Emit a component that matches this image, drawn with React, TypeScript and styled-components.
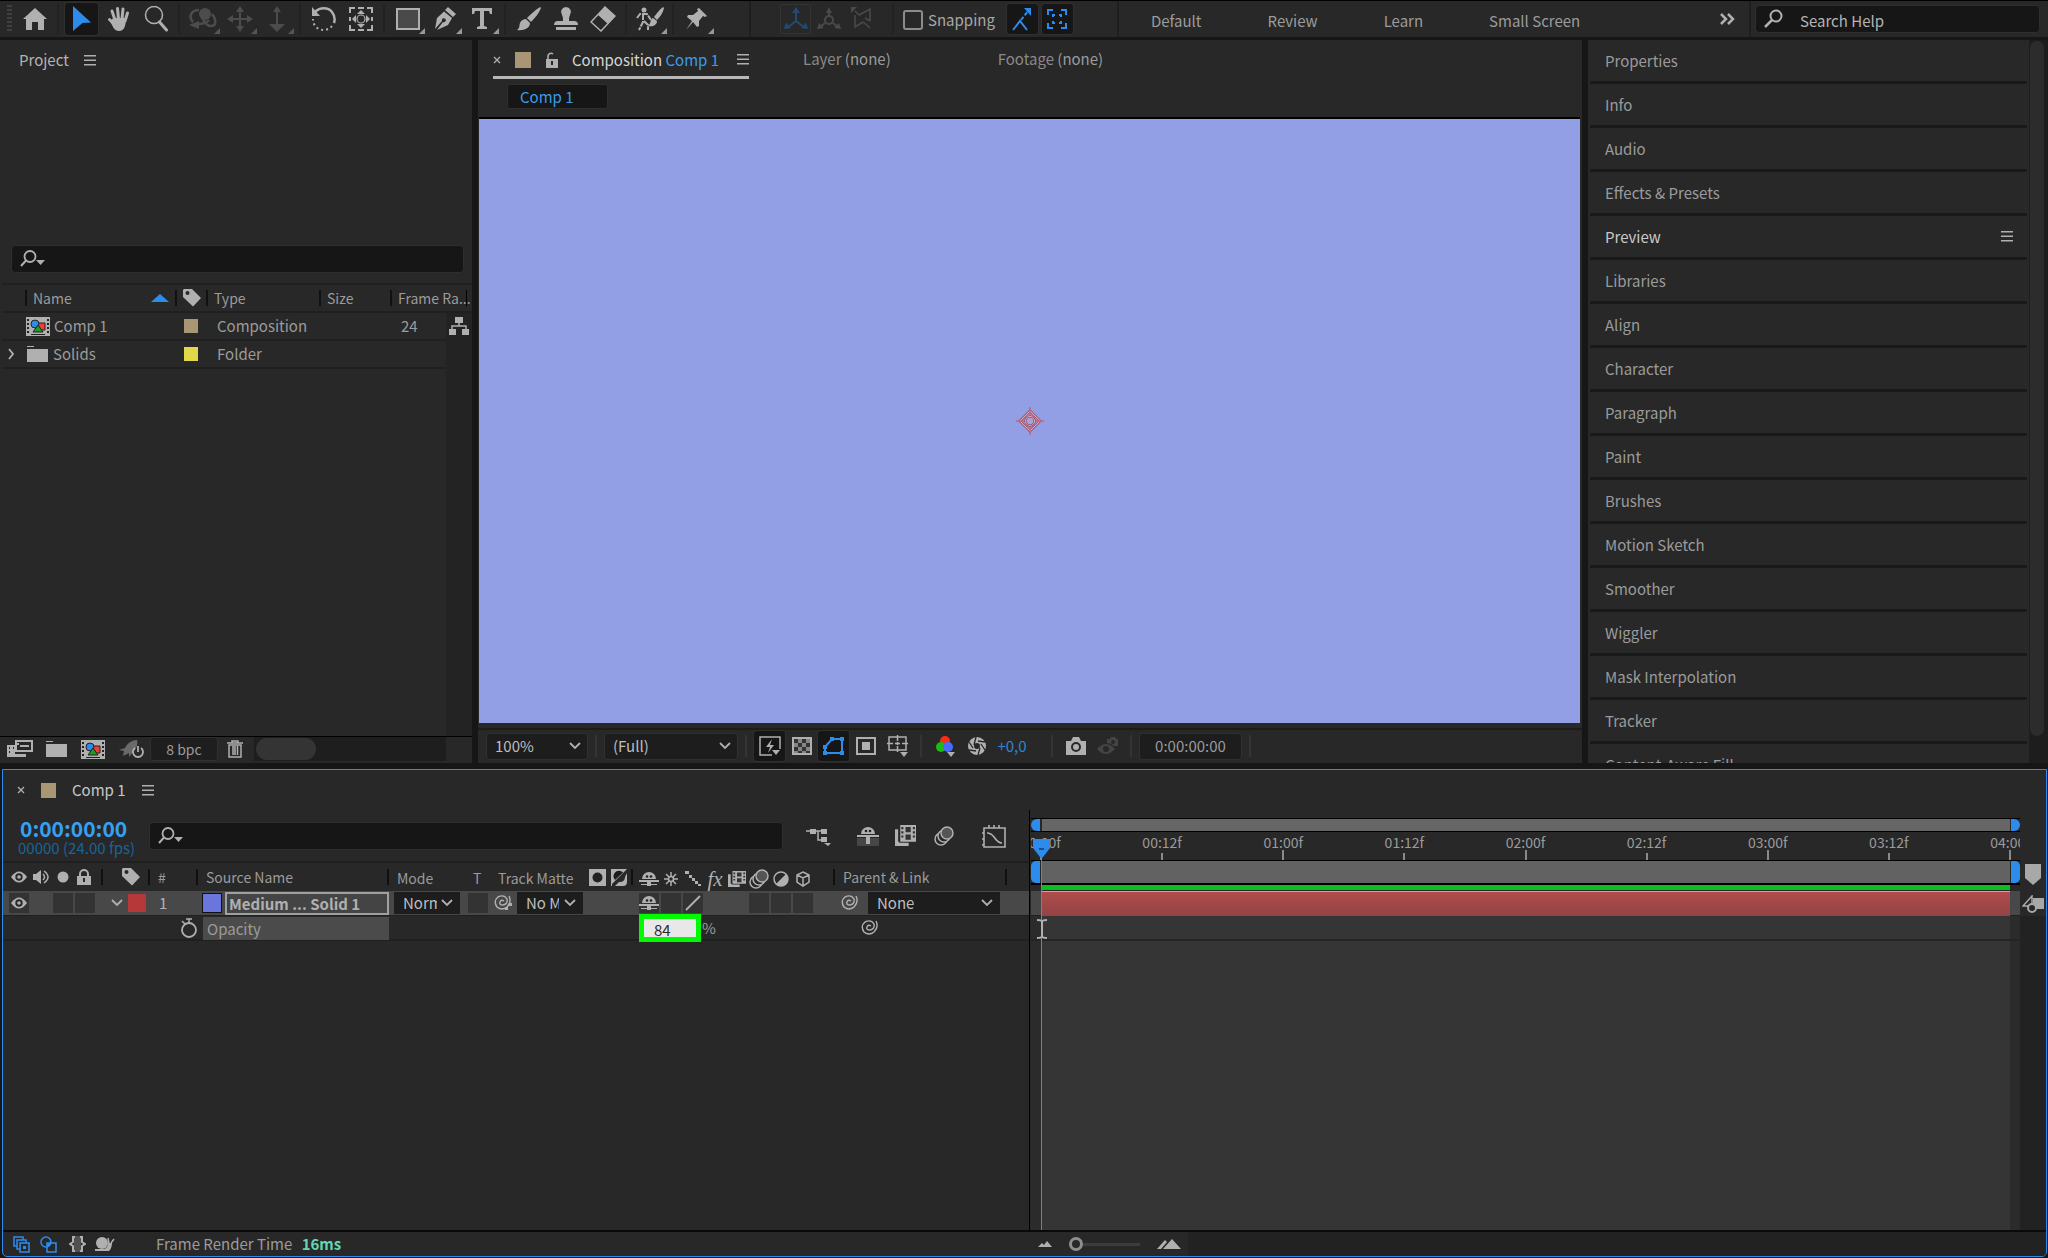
import React from 'react';
import styled, { createGlobalStyle, css } from 'styled-components';

const c = {
  gutter: '#161616',
  panel: '#282828',
  field: '#161616',
  box: '#1d1d1d',
  line: '#1c1c1c',
  text: '#9b9b9b',
  bright: '#c8c8c8',
  icon: '#b0b0b0',
  blue: '#2d8ceb',
  sand: '#a99675',
};

const Global = createGlobalStyle`
  * { box-sizing: border-box; }
  html, body { margin: 0; background: ${c.gutter}; }
  body, button, input, select, table {
    font-family: "Noto Sans CJK SC", "Noto Sans", sans-serif;
    font-size: 15px;
    line-height: 20px;
    color: ${c.text};
  }
  button { padding: 0; border: 0; background: none; }
  svg { display: block; flex: none; }
  h2, p { margin: 0; font-size: 15px; font-weight: 400; }
`;

const App_ = styled.div`
  display: grid;
  grid-template-rows: 40px minmax(0, 1fr) 489px;
  height: 100vh;
  min-width: 1600px;
  overflow: hidden;
`;

/* ---------- icons ---------- */

type IconProps = { w: number; h: number; children: React.ReactNode; color?: string };
const Icon = ({ w, h, children, color = c.icon }: IconProps) => (
  <svg width={w} height={h} viewBox={`0 0 ${w} ${h}`} fill={color} color={color} aria-hidden="true">
    {children}
  </svg>
);
const stroke = { fill: 'none', stroke: 'currentColor', strokeWidth: 2 };
const thin = { fill: 'none', stroke: 'currentColor', strokeWidth: 1.5 };

const HomeIcon = () => (
  <Icon w={24} h={22}><path d="M12 0L24 11h-3v11h-6v-8H9v8H3V11H0z" /></Icon>
);
const ArrowIcon = () => (
  <Icon w={20} h={26} color={c.blue}><path d="M1 0L19 16.500L10.500 17L1 25z" /></Icon>
);
const HandIcon = () => (
  <Icon w={24} h={26}>
    <g fill="none" stroke="currentColor" strokeWidth="3" strokeLinecap="round">
      <path d="M8 14L5 5M11.500 13L10.500 2.500M15 13L16 3M18 15L20.500 7M8 19L2.500 13.500" />
    </g>
    <path d="M6.500 12h13l-1.500 8q-1.500 5-6 5q-4 0-6-4l-3-6z" />
  </Icon>
);
const ZoomIcon = () => (
  <Icon w={24} h={26}>
    <circle cx="10" cy="9" r="8.500" {...thin} />
    <path d="M15.500 16L22.500 24" stroke="currentColor" strokeWidth="3" strokeLinecap="round" />
  </Icon>
);
const OrbitIcon = () => (
  <Icon w={28} h={26} color="#4c4c4c">
    <circle cx="16" cy="8" r="6" />
    <path d="M10 4C2 4 -1 11 4 16M9 18C14 18 19 16 20 14M23 8C28 14 27 20 22 20C18 20 15 16 14 13" {...stroke} strokeWidth="2.500" />
    <path d="M0 19l10-4v8z" />
  </Icon>
);
const PanIcon = () => (
  <Icon w={26} h={26} color="#4c4c4c">
    <path d="M12 5h2v7h7v2h-7v7h-2v-7H5v-2h7z" />
    <path d="M13 0l4 6H9zM13 26l4-6H9zM0 13l6-4v8zM26 13l-6-4v8z" />
  </Icon>
);
const DollyIcon = () => (
  <Icon w={18} h={26} color="#4c4c4c">
    <path d="M8 4h2v14H8zM9 0l4 6H5zM9 26l-8-8h16z" />
  </Icon>
);
const RotateIcon = () => (
  <Icon w={26} h={26}>
    <path d="M4 6C9 1 17 1 21 6C24 10 24 14 23 17" {...stroke} strokeWidth="2.500" />
    <path d="M1 1v9h8z" />
    <path d="M21 20C17 25 9 25 5 21C3 19 2 16 2 13" {...stroke} strokeDasharray="2 3" />
  </Icon>
);
const AnchorIcon = () => (
  <Icon w={26} h={26}>
    <path d="M2 7V2h5M19 2h5v5M24 19v5h-5M7 24H2v-5M10 2h6M10 24h6M2 11v4M24 11v4" {...stroke} />
    <circle cx="13" cy="13" r="4" fill="none" stroke="currentColor" strokeWidth="1.200" />
    <path d="M13 4l4 4H9zM13 22l4-4H9zM4 13l4-4v8zM22 13l-4-4v8z" />
  </Icon>
);
const RectIcon = () => (
  <Icon w={24} h={22}><rect x="1" y="1" width="22" height="20" fill="#4a4a4a" stroke="currentColor" strokeWidth="2" /></Icon>
);
const PenIcon = () => (
  <Icon w={24} h={24}>
    <path d="M15 0l8 7l-3 3l-8-7zM11 4.500l8 6.500l-4 7l-11 5l6-8a2 2 0 1 0-1-1l-7 8L4 11z" />
  </Icon>
);
const TypeIcon = () => (
  <Icon w={22} h={22}><path d="M1 0h20v6h-2l-1-3h-5v15l3 1v2H6v-2l3-1V3H4L3 6H1z" /></Icon>
);
const BrushIcon = () => (
  <Icon w={26} h={24}>
    <path d="M24 0l1 1c-2 5-6 10-10 14l-4-4C15 7 19 3 24 0zM10 12l4 4c0 5-6 8-13 7c3-2 2-4 3-7c1-3 4-4 6-4z" />
  </Icon>
);
const StampIcon = () => (
  <Icon w={24} h={24}>
    <path d="M12 0a5 5 0 0 1 4 8c-1 2-1 4-1 6h5q4 0 4 4H0q0-4 4-4h5c0-2 0-4-1-6a5 5 0 0 1 4-8zM2 20h20v3H2z" />
  </Icon>
);
const EraserIcon = () => (
  <Icon w={26} h={26}>
    <path d="M15 1l10 9L11 25L1 16z" {...thin} />
    <path d="M15 1l10 9l-7 8L8 9z" />
  </Icon>
);
const RotoIcon = () => (
  <Icon w={30} h={26}>
    <circle cx="9" cy="4" r="2.500" />
    <path d="M2 12l3-4h7l4 6M8 8v8l-4 8M9 15l4 4v5" {...stroke} strokeDasharray="6 1" />
    <path d="M28 1l1 1c-1 5-4 9-7 12l-3-3c3-4 5-7 9-10zM18 12l4 3c0 4-4 6-9 5c3-2 2-7 5-8z" />
  </Icon>
);
const PinIcon = () => (
  <Icon w={24} h={24}>
    <path d="M14 1l8 8l-2 1l-2-1l-4 5v5l-2 1l-4-5L1 23l6-9l-5-4l1-2h5l5-4l-1-2z" />
  </Icon>
);
const AxisIcon = ({ color }: { color: string }) => (
  <Icon w={24} h={24} color={color}>
    <path d="M12 3v11L3 21M12 14l9 7" {...stroke} />
    <path d="M12 0l4 6H8zM0 22l2-6l5 5zM24 22l-2-6l-5 5z" />
  </Icon>
);
const WorldAxisIcon = () => (
  <Icon w={24} h={24} color="#4a4a4a">
    <circle cx="12" cy="13" r="4" {...stroke} />
    <path d="M12 3v6M8 16l-5 4M16 16l5 4" {...stroke} />
    <path d="M12 0l3 6H9zM0 22l2-6l5 5zM24 22l-2-6l-5 5z" />
  </Icon>
);
const ViewAxisIcon = () => (
  <Icon w={22} h={24} color="#4a4a4a">
    <path d="M4 4l4 4M4 8v12l8-5M8 8l11-6v12M12 15l7 6M19 14l-5-3" {...thin} />
    <path d="M0 0h6L0 6z" />
  </Icon>
);
const SnapEdgeIcon = () => (
  <Icon w={22} h={24} color={c.blue}>
    <path d="M2 23l7-9l7 9" {...stroke} />
    <path d="M10 13l7-9" {...stroke} strokeDasharray="4 2" />
    <path d="M13 1h7v8z" />
  </Icon>
);
const SnapBoxIcon = () => (
  <Icon w={20} h={20} color={c.blue}>
    <path d="M1 6V1h5M14 1h5v5M19 14v5h-5M6 19H1v-5" {...stroke} />
    <path d="M6 8V6h2M12 6h2v2M14 12v2h-2M8 14H6v-2" {...stroke} />
  </Icon>
);
const SearchIcon = () => (
  <Icon w={20} h={20}>
    <circle cx="12" cy="7" r="5.500" {...stroke} />
    <path d="M8 11L1 18" {...stroke} strokeWidth="2.500" />
  </Icon>
);
const SearchMenuIcon = () => (
  <Icon w={26} h={18}>
    <circle cx="10" cy="6.500" r="5.500" {...thin} strokeWidth="1.800" />
    <path d="M6 10.500L1 16" {...stroke} />
    <path d="M16 10h9l-4.500 5z" />
  </Icon>
);
const MenuIcon = () => (
  <Icon w={12} h={11}><path d="M0 0h12v1.400H0zM0 4.500h12v1.400H0zM0 9h12v1.400H0z" /></Icon>
);
const CloseIcon = () => (
  <Icon w={8} h={8}><path d="M1 1l6 6M7 1L1 7" fill="none" stroke="currentColor" strokeWidth="1.300" /></Icon>
);
const UnlockIcon = () => (
  <Icon w={13} h={16}>
    <path d="M1 7h12v9H1z" /><path d="M3 7V4a3 3 0 0 1 5-2" fill="none" stroke="currentColor" strokeWidth="1.600" />
    <path d="M6 9h2v4H6z" fill={c.panel} />
  </Icon>
);
const LockIcon = () => (
  <Icon w={14} h={16}>
    <path d="M0 7h14v9H0z" /><path d="M3 7V5a4 4 0 0 1 8 0v2" {...stroke} />
    <path d="M6 9h2v4H6z" fill={c.panel} />
  </Icon>
);
const TagIcon = () => (
  <Icon w={18} h={18}>
    <path d="M1 0h8l9 9l-8 8.500L0 8V1z" /><circle cx="4.500" cy="4" r="2" fill={c.panel} />
  </Icon>
);
const Chevron = ({ right }: { right?: boolean }) => right ? (
  <Icon w={6} h={12}><path d="M1 1l4 5l-4 5" fill="none" stroke="currentColor" strokeWidth="1.800" /></Icon>
) : (
  <Icon w={12} h={8}><path d="M1 1l5 5l5-5" fill="none" stroke="currentColor" strokeWidth="1.800" /></Icon>
);
const CompIcon = () => (
  <Icon w={24} h={19}>
    <path d="M0 0h24v19H0z" />
    <path d="M1 2h2v2H1zM1 6h2v2H1zM1 10h2v2H1zM1 14h2v2H1zM21 2h2v2h-2zM21 6h2v2h-2zM21 10h2v2h-2zM21 14h2v2h-2zM5 17h14v1H5z" fill="#222" />
    <path d="M12 6h7v7h-7z" fill="#f33b3b" stroke="#222" />
    <circle cx="9" cy="7" r="4" fill="#2d8ceb" stroke="#222" />
    <path d="M12 8l5 7H7z" fill="#1e9c1e" stroke="#222" />
  </Icon>
);
const FolderIcon = () => (
  <Icon w={21} h={16}><path d="M0 0h7v1H0zM0 3h21v13H0z" /></Icon>
);
const FlowIcon = () => (
  <Icon w={20} h={18}>
    <path d="M6 0h8v6H6zM0 12h7v6H0zM13 12h7v6h-7z" /><path d="M10 6v3M3 12V9h14v3" {...thin} />
  </Icon>
);
const FootageIcon = () => (
  <Icon w={26} h={18}>
    <path d="M0 5h8v9h11v3H0z" /><path d="M9 1h16v10H9z" {...stroke} /><path d="M13 5h9v2h-9zM10 3h2v2h-2z" />
    <path d="M2 7h1v2H2zM2 11h1v2H2zM6 7h1v2H6z" fill={c.panel} />
  </Icon>
);
const RocketIcon = () => (
  <Icon w={25} h={20}>
    <path d="M18 1c-6 0-10 4-12 8l-6 2l5 1l-1 5l6-3v4l4-5c4-4 5-8 4-12z" fill="#6a6a6a" />
    <path d="M16 9a5 5 0 1 0 6 0M19 7v6" {...stroke} strokeWidth="1.800" />
  </Icon>
);
const TrashIcon = () => (
  <Icon w={16} h={18}>
    <path d="M0 3h16M5 3V1h6v2M2 5h12v12H2zM6 6v9M8 6v9M10.500 6v9" fill="none" stroke="currentColor" strokeWidth="1.500" />
  </Icon>
);
const FastPreviewIcon = () => (
  <Icon w={22} h={20}>
    <path d="M13 19H1V1h20v12" {...stroke} strokeWidth="1.500" />
    <path d="M13 3l-6 8h4l-2 6l6-8h-4zM13 14h8l-4 5z" />
  </Icon>
);
const CheckerIcon = () => (
  <Icon w={20} h={18}>
    <rect x="1" y="1" width="18" height="16" fill="#333" stroke="currentColor" strokeWidth="2" />
    <path d="M6 2h4v4H6zM14 2h4v4h-4zM2 6h4v4H2zM10 6h4v4h-4zM6 10h4v4H6zM14 10h4v4h-4zM10 14h4v2h-4zM2 14h4v2H2z" fill="#858585" />
  </Icon>
);
const MaskIcon = () => (
  <Icon w={22} h={20} color={c.blue}>
    <path d="M2 17V11L9 3h10v14z" {...stroke} />
    <path d="M0 15h4v4H0zM0 9h4v4H0zM7 1h4v4H7zM17 1h4v4h-4zM17 15h4v4h-4z" />
  </Icon>
);
const RegionIcon = () => (
  <Icon w={20} h={18}><rect x="1" y="1" width="18" height="16" {...stroke} /><path d="M6 5h8v8H6z" /></Icon>
);
const GuidesIcon = () => (
  <Icon w={22} h={22}>
    <rect x="2" y="2" width="17" height="13" {...stroke} strokeWidth="1.500" />
    <path d="M10.500 0v6M10.500 11v6M0 8.500h6M15 8.500h6M8 8.500h5M10.500 7v3" {...thin} />
    <path d="M13 17h8l-4 5z" />
  </Icon>
);
const RgbIcon = () => (
  <Icon w={20} h={22}>
    <circle cx="10" cy="6" r="5" fill="#ff2a12" /><circle cx="6" cy="12" r="5" fill="#1eb914" />
    <circle cx="13" cy="12" r="5" fill="#476bff" /><path d="M12 17h8l-4 5z" />
  </Icon>
);
const ApertureIcon = () => (
  <Icon w={18} h={18}>
    <circle cx="9" cy="9" r="6" fill="none" stroke="currentColor" strokeWidth="6" />
    <path d="M8 0l-2 8M17 5l-7-1M17 13l-4-6M10 18l2-7M1 13l7 1M1 5l4 6" fill="none" stroke={c.panel} strokeWidth="1.300" />
  </Icon>
);
const CameraIcon = () => (
  <Icon w={20} h={18}>
    <path d="M0 4h5l2-4h6l2 4h5v14H0z" /><circle cx="10" cy="10" r="4" fill="none" stroke={c.panel} strokeWidth="2" />
  </Icon>
);
const ShowSnapshotIcon = () => (
  <Icon w={22} h={20} color="#444">
    <path d="M0 13q9-10 18 0q-9 10-18 0z" /><circle cx="9" cy="13" r="3" fill={c.panel} />
    <path d="M10 3h3l1-2h4l1 2h2v7h-4q-3-3-7-3z" /><circle cx="16" cy="6" r="2" fill={c.panel} />
  </Icon>
);
const EyeIcon = () => (
  <Icon w={16} h={12}>
    <path d="M0 6q8-11 16 0q-8 11-16 0z" /><circle cx="8" cy="6" r="3.700" fill={c.panel} /><circle cx="8" cy="6" r="1.800" />
  </Icon>
);
const SpeakerIcon = () => (
  <Icon w={18} h={14}>
    <path d="M0 4h3l5-4v14l-5-4H0z" /><path d="M10 4q3 3 0 6M11 1q8 6 0 12" {...thin} />
  </Icon>
);
const MiniMapIcon = () => (
  <Icon w={26} h={20}>
    <path d="M4 3h6v5H4zM15 3h6v5h-6zM15 11h6v5h-6zM18 17h7l-3 3z" /><path d="M0 5h16M12 5v9h3" {...thin} />
  </Icon>
);
const ShyIcon = () => (
  <Icon w={20} h={14}>
    <path d="M3 7a7 7 0 0 1 14 0zM0 8h20v2H0zM8 9h4v5H8z" />
    <circle cx="8" cy="4.500" r="1.300" fill="#222" /><circle cx="12" cy="4.500" r="1.300" fill="#222" />
    <path d="M2 12h6v1H2zM12 12h6v1h-6z" />
  </Icon>
);
const ShyLargeIcon = () => (
  <Icon w={24} h={20}>
    <path d="M1 12h22v8H1z" fill="#474747" />
    <path d="M5 8a7 7 0 0 1 14 0zM1 9h22v2H1zM10 10h4v8h-4z" />
    <circle cx="10" cy="5" r="1.300" fill="#222" /><circle cx="14" cy="5" r="1.300" fill="#222" />
  </Icon>
);
const BlendIcon = ({ large }: { large?: boolean }) => (
  <svg width={large ? 21 : 18} height={large ? 21 : 16} viewBox="0 0 20 20" preserveAspectRatio="none" fill={c.icon} aria-hidden="true">
    <path d="M5 0h15v16H5zM0 4h3v12h1v1h9v3H0z" />
    <path d="M6 2h2v2H6zM6 6h2v2H6zM6 10h2v2H6zM17 2h2v2h-2zM17 6h2v2h-2zM17 10h2v2h-2zM10 2h5v5h-5zM10 9h5v5h-5z" fill="#333" />
  </svg>
);
const BlurIcon = () => (
  <Icon w={20} h={20}>
    <circle cx="7" cy="13" r="6" {...thin} fill={c.panel} /><circle cx="10" cy="10" r="6" {...thin} fill={c.panel} />
    <circle cx="13" cy="7" r="6" {...thin} fill="#555" />
  </Icon>
);
const GraphIcon = () => (
  <Icon w={24} h={24}>
    <path d="M2 4h21v19H2zM0 9h2M0 15h2M0 21h2M7 4V1M12 4V1M17 4V1M5 9q4 0 7 4q4 6 8 6" {...stroke} strokeWidth="1.600" />
  </Icon>
);
const MatteIcon = () => (
  <Icon w={17} h={17}><path d="M0 0h17v17H0z" /><circle cx="8.500" cy="8.500" r="5" fill="#222" /></Icon>
);
const MatteInvertIcon = () => (
  <Icon w={17} h={17}>
    <path d="M0 0h16L1 15v2H0zM16 4v9q0 4-4 4H4l4-4h2q4-1 4-5z" />
    <path d="M12 3.500A5 5 0 0 0 4 11z" fill="#1c1c1c" />
  </Icon>
);
const SunIcon = () => (
  <Icon w={14} h={14}>
    <circle cx="7" cy="7" r="2.500" {...thin} />
    <path d="M7 0v4M7 10v4M0 7h4M10 7h4M2 2l3 3M9 9l3 3M12 2L9 5M5 9l-3 3" {...thin} />
  </Icon>
);
const QualityIcon = () => (
  <Icon w={16} h={16}><path d="M0 0h4v3H0zM4 4h3v3H4zM7 7h3v3H7zM10 10h3v3h-3zM13 13h3v2h-3z" /></Icon>
);
const HalfIcon = () => (
  <Icon w={16} h={16}><circle cx="8" cy="8" r="7" {...thin} /><path d="M13 3A7 7 0 0 1 3 13z" /></Icon>
);
const CubeIcon = () => (
  <Icon w={14} h={16}><path d="M7 1l6 3v7l-6 4l-6-4V4zM1 4l6 3l6-3M7 7v8" {...thin} /></Icon>
);
const SlashIcon = () => (
  <Icon w={16} h={16}><path d="M1 15L15 1" {...stroke} /></Icon>
);
const SwirlIcon = ({ dots }: { dots?: boolean }) => (
  <Icon w={18} h={16}>
    <path d="M15 1q3 6-2 11q-5 4-10 0q-4-6 1-10q6-3 9 2q1 5-4 6q-4 0-3-3q1-3 4-1" fill="none" stroke="currentColor" strokeWidth="1.400" />
    {dots && <path d="M11 12h3v3h-3zM15 8h3v3h-3z" />}
  </Icon>
);
const StopwatchIcon = () => (
  <Icon w={16} h={20}>
    <circle cx="8" cy="12" r="7" {...thin} strokeWidth="1.800" /><path d="M5 1h6M8 1v4M1 3l3 3" {...thin} />
  </Icon>
);
const MarkerIcon = () => (
  <Icon w={16} h={21} color="#a8a8a8"><path d="M0 0h16v14l-8 7l-8-7z" /></Icon>
);
const OverlapIcon = () => (
  <Icon w={22} h={18} color="#a8a8a8">
    <path d="M11 3h11v11H11z" /><path d="M10 1v10H1z" {...thin} fill={c.panel} />
    <circle cx="10" cy="13" r="4" {...stroke} fill={c.panel} />
  </Icon>
);
const StackIcon = () => (
  <Icon w={17} h={17} color={c.blue}>
    <path d="M1 1h9v9H1z" {...thin} fill={c.panel} /><path d="M4 4h9v9H4z" {...thin} fill={c.panel} />
    <path d="M7 7h9v9H7z" {...thin} fill={c.panel} /><path d="M10 10h3v3h-3z" />
  </Icon>
);
const ToggleModesIcon = () => (
  <Icon w={17} h={17} color={c.blue}>
    <circle cx="6" cy="6" r="5" {...thin} /><path d="M7 7h9v9H7z" {...thin} /><path d="M7 7h4q-1 3-4 4z" />
  </Icon>
);
const BracesIcon = () => (
  <Icon w={17} h={16}>
    <path d="M5 0h7v16H5z" fill="#505050" />
    <path d="M6 1H4v5L1 8l3 2v5h2M11 1h2v5l3 2l-3 2v5h-2" {...stroke} />
  </Icon>
);
const SnailIcon = () => (
  <Icon w={20} h={15}>
    <circle cx="7" cy="6" r="6" /><path d="M0 12h9q4-1 4-6h4q0 5-3 8H0z" /><path d="M14 6l-1-5M16 6l3-4" {...thin} />
  </Icon>
);

/* ---------- shared parts ---------- */

const Panel = styled.section`
  background: ${c.panel};
  min-width: 0;
  min-height: 0;
  display: flex;
  flex-direction: column;
  overflow: hidden;
`;
const IconButton = styled.button<{ $w?: number; $on?: boolean; $outlined?: boolean }>`
  position: relative;
  display: flex;
  align-items: center;
  justify-content: center;
  flex: none;
  width: ${p => p.$w ?? 31}px;
  height: ${p => (p.$on || p.$outlined ? '30px' : 'auto')};
  border-radius: 3px;
  ${p => p.$on && css`background: ${c.field}; box-shadow: 0 0 0 1px #2f2f2f;`}
  ${p => p.$outlined && css`box-shadow: inset 0 0 0 1px #333;`}
`;
const Swatch = styled.span<{ $color: string; $size?: number }>`
  flex: none;
  display: block;
  width: ${p => p.$size ?? 14}px;
  height: ${p => p.$size ?? 14}px;
  background: ${p => p.$color};
`;
const SelectBox = styled.span<{ $w: number; $h?: number; $pad?: number; $tail?: number; $framed?: boolean }>`
  flex: none;
  display: grid;
  grid-template-columns: minmax(0, 1fr);
  align-items: center;
  width: ${p => p.$w}px;
  height: ${p => p.$h ?? 22}px;
  background: ${c.box};
  border-radius: ${p => (p.$framed ? 3 : 0)}px;
  ${p => p.$framed && css`box-shadow: inset 0 0 0 1px #303030;`}
  > * { grid-area: 1 / 1; }
  > svg { justify-self: end; margin-right: 7px; pointer-events: none; }
  select {
    appearance: none;
    width: calc(100% - ${p => p.$tail ?? 24}px);
    margin: 0;
    padding: 0 0 0 ${p => p.$pad ?? 9}px;
    border: 0;
    background: none;
    color: #bdbdbd;
    text-overflow: clip;
  }
`;
type SelectProps = { label: string; value: string; w: number; h?: number; pad?: number; tail?: number; framed?: boolean };
const Select = ({ label, value, w, h, pad, tail, framed }: SelectProps) => (
  <SelectBox $w={w} $h={h} $pad={pad} $tail={tail} $framed={framed}>
    <select aria-label={label} defaultValue={value}><option>{value}</option></select>
    <Chevron />
  </SelectBox>
);
const SearchBox = styled.label<{ $h: number }>`
  display: flex;
  align-items: center;
  height: ${p => p.$h}px;
  padding-left: 8px;
  background: ${c.field};
  border: 1px solid #2e2e2e;
  border-radius: 4px;
  input {
    flex: 1;
    min-width: 0;
    height: 100%;
    padding: 2px 0 0 16px;
    border: 0;
    outline: 0;
    background: none;
    color: #b4b4b4;
  }
  input::placeholder { color: #b4b4b4; opacity: 1; }
`;

/* ---------- top toolbar ---------- */

const Toolbar = styled.header`
  display: flex;
  align-items: center;
  height: 37px;
  padding-right: 8px;
  background: ${c.panel};
  border-top: 1px solid #000;
`;
const Grip = styled.span`
  width: 5px;
  height: 28px;
  margin: 0 4px 0 7px;
  background: repeating-linear-gradient(#404040 0 2px, ${c.panel} 2px 4px);
`;
const Rule = styled.span<{ $gap?: number; $tall?: boolean }>`
  flex: none;
  width: 2px;
  height: ${p => (p.$tall ? 36 : 30)}px;
  margin: 0 ${p => p.$gap ?? 4}px;
  background: ${p => (p.$tall ? '#1e1e1e' : '#222')};
`;
const ToolButton = styled(IconButton)`
  width: 33px;
  height: 32px;
  margin: 0 2px;
`;
const Corner = styled.span<{ $dim?: boolean }>`
  position: absolute;
  right: -1px;
  bottom: 1px;
  border: 3px solid transparent;
  border-right-color: ${p => (p.$dim ? '#555' : '#999')};
  border-bottom-color: ${p => (p.$dim ? '#555' : '#999')};
`;
const Snapping = styled.label`
  display: flex;
  align-items: center;
  gap: 5px;
  margin-right: 12px;
  padding-top: 2px;
  color: #a8a8a8;
  input {
    appearance: none;
    width: 20px;
    height: 20px;
    margin: 0;
    border: 2px solid #8c8c8c;
    border-radius: 3px;
  }
`;
const Workspaces = styled.nav`
  display: flex;
  gap: 66px;
  padding-left: 28px;
  flex: 1;
  margin-top: 4px;
`;
const HelpSearch = styled.div`width: 285px;`;
const Spacer = styled.span<{ $w?: number }>`
  ${p => (p.$w ? css`flex: none; width: ${p.$w}px;` : css`flex: 1;`)}
`;
const More = styled(IconButton)`margin-right: 10px;`;

type Tool = { name: string; icon: React.ReactNode; on?: boolean; corner?: boolean; dim?: boolean };
const toolGroups: Tool[][] = [
  [{ name: 'Home', icon: <HomeIcon /> }],
  [{ name: 'Selection', icon: <ArrowIcon />, on: true }, { name: 'Hand', icon: <HandIcon /> }, { name: 'Zoom', icon: <ZoomIcon /> }],
  [{ name: 'Orbit', icon: <OrbitIcon />, corner: true, dim: true }, { name: 'Pan', icon: <PanIcon />, corner: true, dim: true }, { name: 'Dolly', icon: <DollyIcon />, corner: true, dim: true }],
  [{ name: 'Rotate', icon: <RotateIcon /> }, { name: 'Pan Behind', icon: <AnchorIcon /> }],
  [{ name: 'Rectangle', icon: <RectIcon />, corner: true }, { name: 'Pen', icon: <PenIcon />, corner: true }, { name: 'Type', icon: <TypeIcon />, corner: true }],
  [{ name: 'Brush', icon: <BrushIcon /> }, { name: 'Clone Stamp', icon: <StampIcon /> }, { name: 'Eraser', icon: <EraserIcon /> }],
  [{ name: 'Roto Brush', icon: <RotoIcon />, corner: true }],
  [{ name: 'Puppet Pin', icon: <PinIcon />, corner: true }],
];

const TopBar = () => (
  <Toolbar>
    <Grip />
    {toolGroups.map((group, i) => (
      <React.Fragment key={i}>
        {i > 0 && <Rule />}
        {group.map(t => (
          <ToolButton key={t.name} aria-label={t.name} $on={t.on}>
            {t.icon}
            {t.corner && <Corner $dim={t.dim} />}
          </ToolButton>
        ))}
      </React.Fragment>
    ))}
    <Spacer $w={30} />
    <Rule $tall />
    <Spacer $w={25} />
    <IconButton $outlined aria-label="Local axis"><AxisIcon color="#234a75" /></IconButton>
    <IconButton $w={35} aria-label="World axis"><WorldAxisIcon /></IconButton>
    <IconButton aria-label="View axis"><ViewAxisIcon /></IconButton>
    <Spacer $w={11} />
    <Rule />
    <Spacer $w={5} />
    <Snapping><input type="checkbox" />Snapping</Snapping>
    <IconButton $on aria-label="Snap along edges"><SnapEdgeIcon /></IconButton>
    <Spacer $w={4} />
    <IconButton $on aria-label="Snap to features"><SnapBoxIcon /></IconButton>
    <Spacer $w={40} />
    <Rule $tall />
    <Workspaces>
      <button>Default</button><button>Review</button><button>Learn</button><button>Small Screen</button>
    </Workspaces>
    <More $w={16} aria-label="More workspaces">
      <Icon w={15} h={12}><path d="M1 1l5 5l-5 5M8 1l5 5l-5 5" fill="none" stroke="currentColor" strokeWidth="2.500" /></Icon>
    </More>
    <Rule $tall />
    <HelpSearch>
      <SearchBox $h={28}><SearchIcon /><input aria-label="Search Help" placeholder="Search Help" /></SearchBox>
    </HelpSearch>
  </Toolbar>
);

/* ---------- project panel ---------- */

const Top = styled.div`
  display: grid;
  grid-template-columns: 472px minmax(0, 1fr) 460px;
  gap: 6px;
  padding-bottom: 6px;
  min-height: 0;
`;
const PanelTitle = styled.div`
  display: flex;
  align-items: center;
  gap: 15px;
  height: 40px;
  padding-left: 19px;
  color: #b4b4b4;
`;
const ProjectSearch = styled.div`padding: 165px 8px 10px 11px;`;
const ProjectTable = styled.table`
  width: calc(100% - 2px);
  margin-left: 2px;
  table-layout: fixed;
  border-collapse: collapse;
  th, td {
    height: 28px;
    padding: 0;
    text-align: left;
    font-weight: 400;
    white-space: nowrap;
    border-bottom: 2px solid #202020;
  }
  th { font-size: 14px; border-top: 2px solid #202020; }
  td:last-child { background: #232323; border-bottom-color: #232323; }
`;
const Head = styled.div<{ $last?: boolean }>`
  display: flex;
  align-items: center;
  justify-content: space-between;
  height: 16px;
  line-height: 16px;
  padding: 0 6px;
  border-left: 2px solid #111;
  ${p => p.$last && css`border-right: 1px solid #000; padding-right: 0; margin-right: 5px;`}
`;
const NameCell = styled.div<{ $gap: number }>`
  display: flex;
  align-items: center;
  gap: ${p => p.$gap}px;
`;
const Twirl = styled.span`
  display: flex;
  width: 20px;
  padding-left: 6px;
`;
const Center = styled.div`display: flex; justify-content: center;`;
const Fill = styled.div<{ $strip?: boolean }>`
  flex: 1;
  min-height: 0;
  ${p => p.$strip && css`
    display: flex;
    justify-content: flex-end;
    &::after { content: ''; width: 26px; background: #232323; }
  `}
`;
const ProjectFooter = styled.footer`
  display: flex;
  align-items: center;
  height: 27px;
  padding: 0 0 2px 7px;
  border-top: 1px solid #000;
`;
const Bpc = styled.button`
  width: 66px;
  height: 22px;
  margin: 0 9px 0 7px;
  border-radius: 3px;
  background: #1e1e1e;
  font-size: 14px;
  box-shadow: 0 0 0 1px #2f2f2f;
`;
const HScroll = styled.div`
  flex: 1;
  height: 24px;
  margin: 0 26px 0 10px;
  padding: 1px 2px;
  background: #1e1e1e;
  &::before { content: ''; display: block; width: 60px; height: 22px; border-radius: 11px; background: #343434; }
`;

const Project = () => (
  <Panel>
    <PanelTitle><h2>Project</h2><MenuIcon /></PanelTitle>
    <ProjectSearch>
      <SearchBox $h={28}><SearchMenuIcon /><input aria-label="Search project" /></SearchBox>
    </ProjectSearch>
    <ProjectTable>
      <colgroup>
        <col style={{ width: 23 }} /><col style={{ width: 150 }} /><col style={{ width: 31 }} />
        <col style={{ width: 113 }} /><col style={{ width: 71 }} /><col style={{ width: 56 }} /><col />
      </colgroup>
      <thead>
        <tr>
          <th />
          <th><Head>Name<Icon w={18} h={8} color={c.blue}><path d="M9 0l9 8H0z" /></Icon></Head></th>
          <th><Head><TagIcon /></Head></th>
          <th><Head>Type</Head></th>
          <th><Head>Size</Head></th>
          <th colSpan={2}><Head $last>Frame Ra...</Head></th>
        </tr>
      </thead>
      <tbody>
        <tr>
          <td colSpan={2}><NameCell $gap={4}><Twirl /><CompIcon />Comp 1</NameCell></td>
          <td><Center><Swatch $color={c.sand} /></Center></td>
          <td colSpan={2}><NameCell $gap={11}><span />Composition</NameCell></td>
          <td><NameCell $gap={11}><span />24</NameCell></td>
          <td><Center><FlowIcon /></Center></td>
        </tr>
        <tr>
          <td colSpan={2}><NameCell $gap={5}><Twirl><Chevron right /></Twirl><FolderIcon />Solids</NameCell></td>
          <td><Center><Swatch $color="#e3d84a" /></Center></td>
          <td colSpan={2}><NameCell $gap={11}><span />Folder</NameCell></td>
          <td />
          <td />
        </tr>
      </tbody>
    </ProjectTable>
    <Fill $strip />
    <ProjectFooter>
      <IconButton $w={26} aria-label="Interpret footage"><FootageIcon /></IconButton>
      <Spacer $w={13} />
      <IconButton $w={21} aria-label="New folder"><FolderIcon /></IconButton>
      <Spacer $w={14} />
      <IconButton $w={24} aria-label="New composition"><CompIcon /></IconButton>
      <Spacer $w={14} />
      <IconButton $w={25} aria-label="Project settings"><RocketIcon /></IconButton>
      <Bpc>8 bpc</Bpc>
      <IconButton $w={18} aria-label="Delete"><TrashIcon /></IconButton>
      <HScroll />
    </ProjectFooter>
  </Panel>
);

/* ---------- composition panel ---------- */

const CompTabs = styled.div`
  display: flex;
  align-items: stretch;
  height: 39px;
  padding-left: 15px;
`;
const ActiveTab = styled.div`
  display: flex;
  align-items: center;
  gap: 14px;
  padding-top: 3px;
  margin-right: 54px;
  border-bottom: 3px solid #b8b8b8;
  color: #d6d6d6;
  span + svg, svg + span { margin-right: 0; }
  b { padding-right: 4px; font-weight: 400; color: #3d9ce8; }
`;
const Tab = styled.button`
  padding-bottom: 1px;
  margin-right: 107px;
  color: #8a8a8a;
  span { color: #9b9b9b; }
`;
const Crumbs = styled.div`
  height: 38px;
  padding: 5px 0 0 29px;
`;
const Crumb = styled.button`
  width: 101px;
  height: 25px;
  padding-left: 12px;
  text-align: left;
  background: ${c.field};
  border: 1px solid #2e2e2e;
  border-radius: 3px;
  color: #3d9ce8;
`;
const Viewer = styled.div`
  flex: 1;
  min-height: 0;
  margin: 0 2px 5px 1px;
  border-top: 2px solid #000;
  background: #939fe5;
  display: flex;
  align-items: center;
  justify-content: center;
`;
const CompFooter = styled.footer`
  display: flex;
  align-items: center;
  height: 35px;
  padding-left: 8px;
  padding-bottom: 1px;
  border-top: 2px solid ${c.line};
`;
const Bar = styled.span`
  flex: none;
  width: 2px;
  height: 22px;
  margin: 0 7px;
  background: #343434;
`;
const ButtonSet = styled.div<{ $gap?: number }>`display: flex; align-items: center; gap: ${p => p.$gap ?? 1}px;`;
const Exposure = styled.button`
  width: 38px;
  margin-right: 13px;
  color: #2f86d3;
`;
const PreviewTime = styled.button`
  width: 103px;
  height: 27px;
  background: ${c.box};
  border: 1px solid #303030;
  border-radius: 3px;
`;

const Composition = () => (
  <Panel>
    <CompTabs>
      <ActiveTab>
        <CloseIcon /><Swatch $color={c.sand} $size={16} /><UnlockIcon />
        <span>Composition <b>Comp 1</b></span>
        <MenuIcon />
      </ActiveTab>
      <Tab>Layer <span>(none)</span></Tab>
      <Tab>Footage <span>(none)</span></Tab>
    </CompTabs>
    <Crumbs><Crumb>Comp 1</Crumb></Crumbs>
    <Viewer>
      <svg width="28" height="28" viewBox="0 0 28 28" fill="none">
        <path d="M14 4l10 10l-10 10L4 14z" stroke="#5c2b45" strokeWidth="2.400" />
        <path d="M14 4l10 10l-10 10L4 14z" stroke="#f0a0ac" strokeWidth="1.400" />
        <path d="M14 0v9M14 19v9M0 14h9M19 14h9" stroke="#c8647c" strokeWidth="1.400" />
        <circle cx="14" cy="14" r="4.500" fill="#a5a2dc" stroke="#7a3c58" strokeWidth="2.200" />
        <circle cx="14" cy="14" r="4.500" stroke="#f0a0ac" strokeWidth="1.200" />
      </svg>
    </Viewer>
    <CompFooter>
      <Select label="Magnification" value="100%" w={102} h={27} framed />
      <Bar />
      <Select label="Resolution" value="(Full)" w={134} h={27} framed />
      <Bar />
      <ButtonSet>
        <IconButton $on aria-label="Fast previews"><FastPreviewIcon /></IconButton>
        <IconButton aria-label="Transparency grid"><CheckerIcon /></IconButton>
        <IconButton $on aria-label="Mask visibility"><MaskIcon /></IconButton>
        <IconButton aria-label="Region of interest"><RegionIcon /></IconButton>
        <IconButton aria-label="Guides"><GuidesIcon /></IconButton>
      </ButtonSet>
      <Bar />
      <ButtonSet>
        <IconButton aria-label="Channels"><RgbIcon /></IconButton>
        <IconButton aria-label="Reset exposure"><ApertureIcon /></IconButton>
        <Exposure>+0,0</Exposure>
      </ButtonSet>
      <Bar />
      <ButtonSet>
        <IconButton aria-label="Take snapshot"><CameraIcon /></IconButton>
        <IconButton aria-label="Show snapshot"><ShowSnapshotIcon /></IconButton>
      </ButtonSet>
      <Bar />
      <PreviewTime>0:00:00:00</PreviewTime>
      <Bar />
    </CompFooter>
  </Panel>
);

/* ---------- right stack ---------- */

const Stack = styled.aside`
  display: flex;
  min-height: 0;
  overflow: hidden;
`;
const StackList = styled.div`flex: 1; overflow: hidden; background: ${c.panel};`;
const StackRow = styled.button<{ $on?: boolean }>`
  display: flex;
  align-items: center;
  justify-content: space-between;
  width: calc(100% - 4px);
  height: 44px;
  margin-left: 2px;
  padding: 0 14px 0 15px;
  border-bottom: 3px solid #191919;
  color: ${p => (p.$on ? c.bright : c.text)};
`;
const VScroll = styled.div`
  width: 19px;
  padding: 1px 2px 27px 1px;
  background: #1d1d1d;
  &::before { content: ''; display: block; height: 100%; width: 14px; border-radius: 7px; background: #2c2c2c; }
`;
const panels = ['Properties', 'Info', 'Audio', 'Effects & Presets', 'Preview', 'Libraries', 'Align', 'Character',
  'Paragraph', 'Paint', 'Brushes', 'Motion Sketch', 'Smoother', 'Wiggler', 'Mask Interpolation', 'Tracker', 'Content-Aware Fill'];

const PanelStack = () => (
  <Stack>
    <StackList>
      {panels.map(p => (
        <StackRow key={p} $on={p === 'Preview'}>{p}{p === 'Preview' && <MenuIcon />}</StackRow>
      ))}
    </StackList>
    <VScroll />
  </Stack>
);

/* ---------- timeline ---------- */

const TimelinePanel = styled(Panel)`
  margin: 0 1px 1px 2px;
  border: 1px solid ${c.blue};
  border-radius: 0 0 5px 5px;
`;
const TimelineTab = styled.div`
  display: flex;
  align-items: center;
  gap: 16px;
  height: 40px;
  padding-left: 14px;
  color: ${c.bright};
`;
const TimelineBody = styled.div`
  flex: 1;
  display: grid;
  grid-template-columns: 1027px minmax(0, 1fr) 26px;
  min-height: 0;
`;
const Left = styled.div`
  display: flex;
  flex-direction: column;
  border-right: 1px solid #000;
`;
const Controls = styled.div`
  display: flex;
  align-items: center;
  height: 51px;
  padding-left: 15px;
`;
const Timecode = styled.div`
  width: 131px;
  padding-top: 4px;
  font-size: 15px;
  color: #1a6499;
  strong { display: block; padding-left: 2px; font-size: 21px; font-weight: 700; color: #36a0f2; }
`;
const LayerSearch = styled.div`width: 634px; margin-right: 23px;`;
const columns = css`
  display: grid;
  grid-template-columns: 100px 47px 48px 191px 244px 202px 172px 1fr;
  align-items: center;
`;
const ColumnHeads = styled.div`
  ${columns}
  height: 30px;
  border-top: 2px solid #1f1f1f;
  font-size: 14px;
  > * {
    display: flex;
    align-items: center;
    height: 16px;
    line-height: 16px;
    border-right: 2px solid #101010;
  }
  > :last-child { border: 0; }
`;
const Av = styled.div`
  display: flex;
  align-items: center;
  padding-left: 8px;
  gap: 6px;
`;
const Inset = styled.div<{ $l: number }>`padding-left: ${p => p.$l}px;`;
const ModeHeads = styled.div`
  && { display: grid; grid-template-columns: 76px 25px 91px 22px 1fr; }
  padding-left: 8px;
`;
const Switches = styled.div`
  display: grid;
  grid-template-columns: repeat(8, 20px);
  gap: 2px;
  padding-left: 6px;
  && { display: grid; }
  > * { display: flex; justify-content: center; align-items: center; }
`;
const Fx = styled.em`font: italic 21px/16px "Liberation Serif", serif; color: ${c.icon};`;
const LayerRow = styled.div`
  ${columns}
  height: 25px;
  background: #484848;
  border-bottom: 1px solid #202020;
`;
const PropRow = styled.div`
  ${columns}
  height: 25px;
  border-bottom: 2px solid #202020;
`;
const Cell = styled.button<{ $blank?: boolean }>`
  display: flex;
  align-items: center;
  justify-content: center;
  width: 20px;
  height: 20px;
  ${p => !p.$blank && css`background: #333;`}
`;
const AvCells = styled.div`
  display: grid;
  grid-template-columns: 20px 20px 20px 20px;
  gap: 2px;
  padding-left: 6px;
`;
const LabelCell = styled.div`display: flex; align-items: center; gap: 5px; padding-left: 8px;`;
const Index = styled.div`padding-left: 9px; color: #b4b4b4;`;
const NameGroup = styled.div`
  display: flex;
  align-items: center;
  gap: 3px;
  padding-left: 4px;
`;
const SolidChip = styled(Swatch)`border: 1px solid #111;`;
const LayerName = styled.span`
  flex: 1;
  height: 23px;
  padding-left: 2px;
  line-height: 19px;
  white-space: nowrap;
  border: 2px solid #a0a0a0;
  background: #444;
  color: #b0b0b0;
  font-weight: 700;
`;
const ModeCells = styled.div`display: flex; align-items: center; padding-left: 5px;`;
const ParentCell = styled(ModeCells)`padding-left: 6px;`;
const Stopwatch = styled.div`display: flex; justify-content: flex-end; margin-right: 1px;`;
const PropName = styled.div`
  height: 23px;
  margin-left: 5px;
  padding-left: 4px;
  line-height: 23px;
  background: #4b4b4b;
`;
const Value = styled.label`
  display: flex;
  align-items: center;
  gap: 1px;
  height: 24px;
  margin-left: 6px;
  overflow: visible;
  input {
    position: relative;
    width: 62px;
    height: 28px;
    flex: none;
    padding: 2px 0 0 10px;
    border: 5px solid #00fb00;
    outline: 0;
    background: #e8e8e8;
    color: #2b2b2b;
  }
`;

const Track = styled.div`
  position: relative;
  display: flex;
  flex-direction: column;
  overflow: hidden;
  padding-top: 8px;
  margin-left: 1px;
`;
const Navigator = styled.div`
  display: flex;
  height: 14px;
  border: 1px solid #000;
  border-width: 1px 0;
  background: #666;
`;
const Handle = styled.button<{ $side: 'left' | 'right'; $r: number }>`
  width: 9px;
  height: 100%;
  background: ${c.blue};
  border-radius: ${p => (p.$side === 'left' ? `${p.$r}px 0 0 ${p.$r}px` : `0 ${p.$r}px ${p.$r}px 0`)};
`;
const HandleSlot = styled.div<{ $end?: boolean }>`
  display: flex;
  width: ${p => (p.$end ? 10 : 11)}px;
  justify-content: ${p => (p.$end ? 'flex-end' : 'flex-start')};
  background: ${c.panel};
`;
const Ruler = styled.div`
  display: flex;
  height: 28px;
  padding: 0 11px 0 9px;
  font-size: 14px;
`;
const Mark = styled.div<{ $major?: boolean; $end?: boolean }>`
  flex: ${p => (p.$end ? '0 0 0' : '1 1 0')};
  width: 0;
  min-width: 0;
  display: flex;
  flex-direction: column;
  justify-content: space-between;
  span { display: flex; justify-content: center; width: 2px; line-height: 20px; white-space: nowrap; }
  &::after {
    content: '';
    width: 2px;
    height: ${p => (p.$major ? 10 : 7)}px;
    margin-top: -10px;
    background: #8a8a8a;
  }
`;
const WorkArea = styled.div`
  display: flex;
  height: 25px;
  border: 1px solid #000;
  border-width: 1px 0 2px;
  background: #626262;
`;
const RenderBar = styled.div`
  height: 5px;
  margin: 0 10px 1px 11px;
  background: #10bd20;
`;
const Clip = styled.div`
  height: 25px;
  padding: 0 10px 0 11px;
  background: #484848;
  border-bottom: 1px solid #202020;
  &::before {
    content: '';
    display: block;
    height: 24px;
    border-top: 1px solid #dba09f;
    background: linear-gradient(#b04c4d, #934344);
  }
`;
const Lane = styled.div<{ $fill?: boolean }>`
  ${p => (p.$fill ? css`flex: 1;` : css`height: 25px; border-bottom: 2px solid #242424;`)}
  background: linear-gradient(90deg, #2b2b2b 11px, #353535 11px calc(100% - 10px), #2b2b2b calc(100% - 10px));
`;
const Playhead = styled.div`
  position: absolute;
  left: 1px;
  top: 29px;
  bottom: 0;
  width: 19px;
  display: flex;
  flex-direction: column;
  align-items: center;
  &::after { content: ''; flex: 1; width: 1px; background: #3f8fdd; }
`;
const TextCursor = styled.div`
  position: absolute;
  left: 5px;
  top: 109px;
`;
const Side = styled.div`
  display: flex;
  flex-direction: column;
  align-items: center;
  gap: 10px;
  padding-top: 54px;
  background: linear-gradient(${c.panel} 106px, #222 106px);
`;
const TimelineFooter = styled.footer`
  display: grid;
  grid-template-columns: 1027px 158px 1fr;
  height: 26px;
  border-top: 2px solid #0a0a0a;
  > :last-child { background: #222; }
`;
const FooterLeft = styled.div`
  display: flex;
  align-items: center;
  padding-left: 5px;
  p { padding-left: 37px; }
  p strong { padding-left: 6px; font-weight: 700; color: #62d6b2; }
`;
const FooterZoom = styled.label`
  display: flex;
  align-items: center;
  gap: 17px;
  padding-left: 8px;
  input {
    appearance: none;
    width: 71px;
    height: 14px;
    margin: 0;
    background: linear-gradient(#3c3c3c, #3c3c3c) center / 100% 3px no-repeat;
  }
  input::-webkit-slider-thumb {
    appearance: none;
    width: 14px;
    height: 14px;
    border: 3px solid #8e8e8e;
    border-radius: 50%;
    background: ${c.panel};
  }
`;

const marks = ['00:00f', '00:12f', '01:00f', '01:12f', '02:00f', '02:12f', '03:00f', '03:12f', '04:00f'];

const Timeline = () => (
  <TimelinePanel>
    <TimelineTab>
      <CloseIcon /><Swatch $color={c.sand} $size={15} /><h2>Comp 1</h2><MenuIcon />
    </TimelineTab>
    <TimelineBody>
      <Left>
        <Controls>
          <Timecode><strong>0:00:00:00</strong>00000 (24.00 fps)</Timecode>
          <LayerSearch>
            <SearchBox $h={28}><SearchMenuIcon /><input aria-label="Search layers" /></SearchBox>
          </LayerSearch>
          <IconButton $w={26} aria-label="Mini-flowchart"><MiniMapIcon /></IconButton>
          <Spacer $w={20} />
          <ButtonSet $gap={7}>
            <IconButton aria-label="Hide shy layers"><ShyLargeIcon /></IconButton>
            <IconButton aria-label="Frame blending"><BlendIcon large /></IconButton>
            <IconButton aria-label="Motion blur"><BlurIcon /></IconButton>
          </ButtonSet>
          <Spacer $w={19} />
          <IconButton aria-label="Graph editor"><GraphIcon /></IconButton>
        </Controls>
        <ColumnHeads>
          <Av>
            <EyeIcon /><SpeakerIcon />
            <Icon w={14} h={12}><circle cx="6" cy="6" r="5.500" /></Icon>
            <LockIcon />
          </Av>
          <Inset $l={19}><TagIcon /></Inset>
          <Inset $l={8}>#</Inset>
          <Inset $l={8}>Source Name</Inset>
          <ModeHeads>
            <span>Mode</span><span>T</span><span>Track Matte</span><MatteIcon /><MatteInvertIcon />
          </ModeHeads>
          <Switches>
            <span><ShyIcon /></span><span><SunIcon /></span><span><QualityIcon /></span><Fx>fx</Fx>
            <span><BlendIcon /></span><span><BlurIcon /></span><span><HalfIcon /></span><span><CubeIcon /></span>
          </Switches>
          <Inset $l={8}>Parent &amp; Link</Inset>
          <span />
        </ColumnHeads>
        <LayerRow>
          <AvCells>
            <Cell aria-label="Visible"><EyeIcon /></Cell><span />
            <Cell aria-label="Solo" /><Cell aria-label="Lock" />
          </AvCells>
          <LabelCell><Chevron /><Swatch $color="#b63839" $size={18} /></LabelCell>
          <Index>1</Index>
          <NameGroup><SolidChip $color="#6a76dd" $size={20} /><LayerName>Medium ... Solid 1</LayerName></NameGroup>
          <ModeCells>
            <Select label="Mode" value="Normal" w={66} tail={23} />
            <Spacer $w={8} /><Cell aria-label="Preserve transparency" /><Spacer $w={6} />
            <SwirlIcon dots /><Spacer $w={5} />
            <Select label="Track Matte" value="No Matte" w={66} tail={24} />
          </ModeCells>
          <Switches>
            <Cell aria-label="Shy"><ShyIcon /></Cell><Cell aria-label="Collapse" /><Cell aria-label="Quality"><SlashIcon /></Cell>
            <span /><span />
            <Cell aria-label="Motion blur" /><Cell aria-label="Adjustment" /><Cell aria-label="3D" />
          </Switches>
          <ParentCell>
            <SwirlIcon /><Spacer $w={9} />
            <Select label="Parent" value="None" w={132} />
          </ParentCell>
          <span />
        </LayerRow>
        <PropRow>
          <span /><span />
          <Stopwatch><StopwatchIcon /></Stopwatch>
          <PropName>Opacity</PropName>
          <span />
          <Value><input aria-label="Opacity" defaultValue="84" />%</Value>
          <Inset $l={26}><SwirlIcon /></Inset>
          <span />
        </PropRow>
      </Left>
      <Track>
        <Navigator>
          <HandleSlot><Handle $side="left" $r={6} aria-label="Start of view" /></HandleSlot>
          <Spacer />
          <HandleSlot $end><Handle $side="right" $r={6} aria-label="End of view" /></HandleSlot>
        </Navigator>
        <Ruler>
          {marks.map((m, i) => (
            <Mark key={m} $major={i % 2 === 0} $end={i === marks.length - 1}><span>{m}</span></Mark>
          ))}
        </Ruler>
        <WorkArea>
          <HandleSlot><Handle $side="left" $r={5} aria-label="Work area start" /></HandleSlot>
          <Spacer />
          <HandleSlot $end><Handle $side="right" $r={5} aria-label="Work area end" /></HandleSlot>
        </WorkArea>
        <RenderBar />
        <Clip />
        <Lane />
        <Lane $fill />
        <Playhead>
          <Icon w={17} h={20} color={c.blue}><path d="M0 0h17v9l-8.500 11L0 9z" /><path d="M6 9h5v2H6z" fill="#1b4f86" /></Icon>
        </Playhead>
        <TextCursor>
          <Icon w={12} h={20}><path d="M1 1q5 0 5 2q0-2 5-2M6 3v14M1 19q5 0 5-2q0 2 5 2" {...stroke} /></Icon>
        </TextCursor>
      </Track>
      <Side><MarkerIcon /><OverlapIcon /></Side>
    </TimelineBody>
    <TimelineFooter>
      <FooterLeft>
        <IconButton $w={26} aria-label="Layer switches"><StackIcon /></IconButton>
        <IconButton $w={29} aria-label="Transfer controls"><ToggleModesIcon /></IconButton>
        <IconButton $w={28} aria-label="In and out"><BracesIcon /></IconButton>
        <IconButton $w={28} aria-label="Render time"><SnailIcon /></IconButton>
        <p>Frame Render Time <strong>16ms</strong></p>
      </FooterLeft>
      <FooterZoom>
        <Icon w={14} h={6}><path d="M0 6l4-4l2 2l3-4l5 6z" /></Icon>
        <input type="range" aria-label="Time zoom" defaultValue={0} />
        <Icon w={24} h={10}><path d="M0 10L8 1l2 2l-6 7zM6 10l9-10l9 10z" /></Icon>
      </FooterZoom>
      <span />
    </TimelineFooter>
  </TimelinePanel>
);

export default function App() {
  return (
    <>
      <Global />
      <App_>
        <TopBar />
        <Top>
          <Project />
          <Composition />
          <PanelStack />
        </Top>
        <Timeline />
      </App_>
    </>
  );
}
